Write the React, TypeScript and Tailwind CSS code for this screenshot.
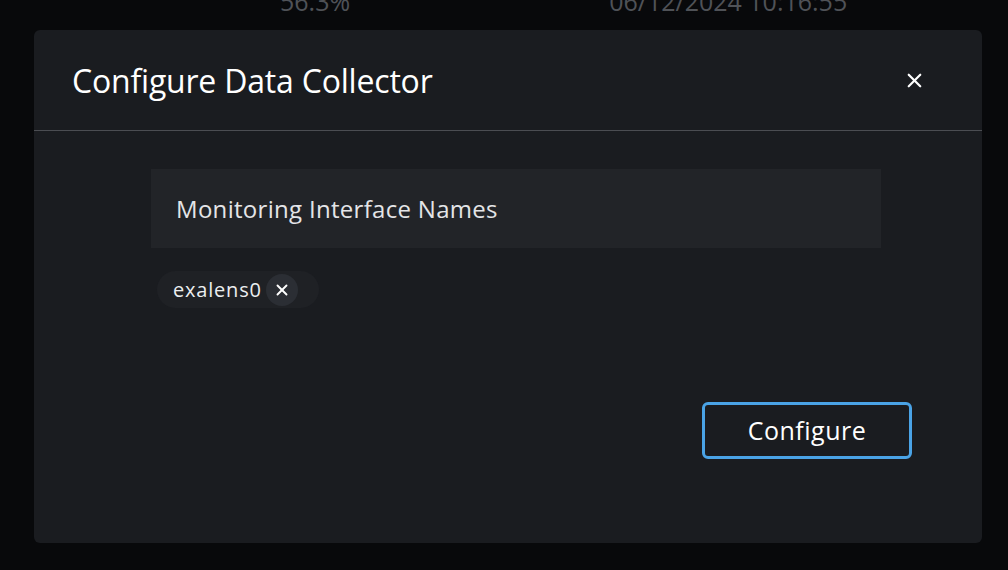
import { X } from "lucide-react";

export default function App() {
  return (
    <div className="h-[570px] w-full overflow-hidden bg-[#08090b] font-['Open_Sans',sans-serif]">
      {/* page content peeking out above the dialog */}
      <div className="relative h-[30px] overflow-hidden">
        <div className="-mt-[14px] flex text-[25px] leading-[30px] text-[#4f5257]">
          <span className="ml-[280px]">56.3%</span>
          <span className="ml-[259px]">06/12/2024 10:16:55</span>
        </div>
      </div>

      <div className="ml-[34px] flex h-[513px] w-[948px] flex-col rounded-[6px] bg-[#1a1c20]">
        <div className="flex h-[101px] items-center justify-between border-b border-[#4b4d52] pl-[38px] pr-[56px] pt-[1px]">
          <h2 className="text-[32px] font-normal tracking-[-0.2px] text-white">Configure Data Collector</h2>
          <button className="text-white">
            <X className="h-[23px] w-[23px]" strokeWidth={2.3} />
          </button>
        </div>

        <div className="flex flex-1 flex-col pt-[38px]">
          <div className="ml-[117px] flex h-[79px] w-[730px] items-center bg-[#222428] px-[25px] text-[24px] tracking-[0.3px] text-[#e4e5e7]">
            Monitoring Interface Names
          </div>
          <div className="ml-[123px] mt-[23px] flex h-[37px] w-fit items-center gap-[4px] rounded-full bg-[#1f2125] pl-[16px] pr-[21px]">
            <span className="text-[20px] tracking-[0.8px] text-[#eceef0]">exalens0</span>
            <span className="flex h-[32px] w-[32px] items-center justify-center rounded-full bg-[#2b2e34] text-white">
              <X className="h-[18px] w-[18px]" strokeWidth={2.5} />
            </span>
          </div>
          <div className="mt-[94px] flex justify-end pr-[70px]">
            <button className="h-[57px] w-[210px] rounded-[6px] border-[3px] border-[#4aa3e6] text-[25px] tracking-[0.5px] text-white">
              Configure
            </button>
          </div>
        </div>
      </div>
    </div>
  );
}
